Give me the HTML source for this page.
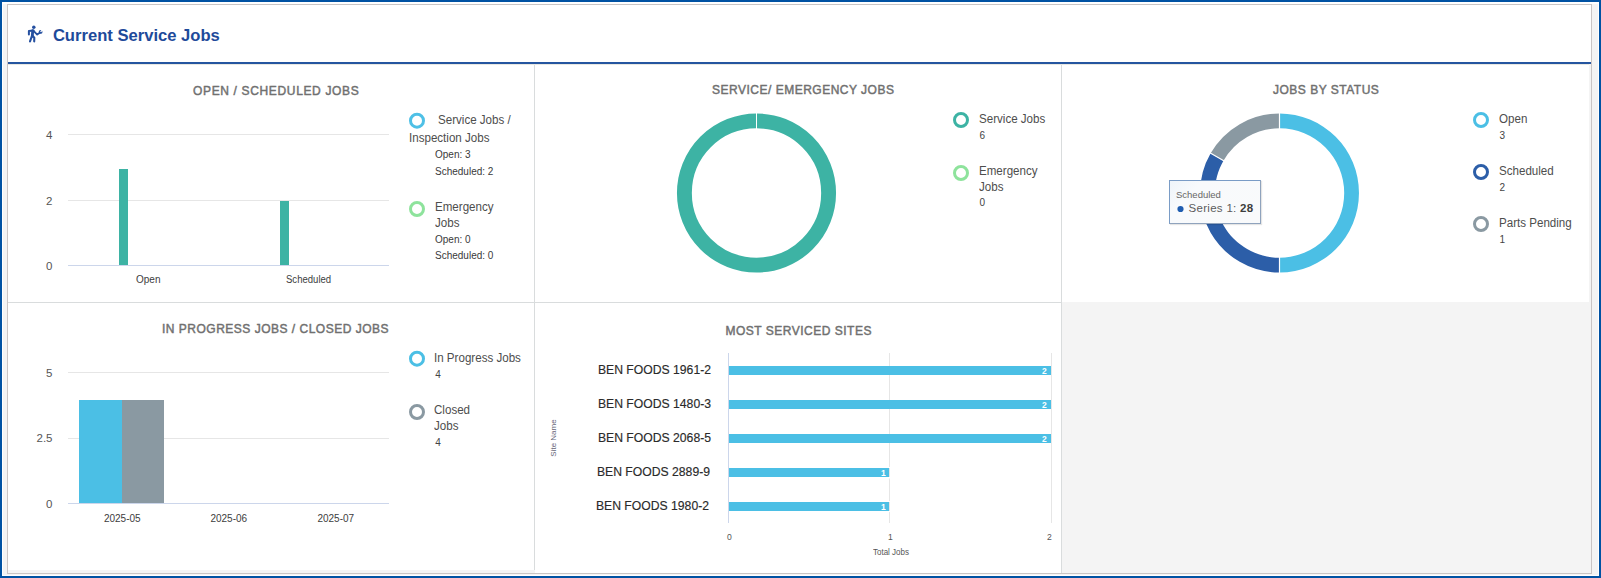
<!DOCTYPE html>
<html><head><meta charset="utf-8">
<style>
html,body{margin:0;padding:0;width:1601px;height:578px;overflow:hidden;background:#fff;}
body{position:relative;font-family:"Liberation Sans",sans-serif;}
.a{position:absolute;}
.t{position:absolute;white-space:nowrap;line-height:1;}
.ttl{position:absolute;white-space:nowrap;line-height:1;font-size:12px;font-weight:normal;-webkit-text-stroke:0.45px #707070;color:#707070;letter-spacing:0.5px;}
.ttl1{letter-spacing:0.65px;}
.lg{position:absolute;white-space:nowrap;line-height:1;font-size:12px;color:#4d4d4d;transform:scaleX(0.965);transform-origin:0 0;}
.sm{position:absolute;white-space:nowrap;line-height:1;font-size:10px;color:#3a3a3a;}
.ax{position:absolute;white-space:nowrap;line-height:1;font-size:11.5px;color:#555;width:30px;text-align:right;}
.xl{position:absolute;white-space:nowrap;line-height:1;font-size:10px;color:#3d3d3d;}
.bn{position:absolute;white-space:nowrap;line-height:1;font-size:12.2px;color:#2a2a2a;text-align:right;-webkit-text-stroke:0.15px #2a2a2a;}
</style></head>
<body>
<!-- frame -->
<div class="a" style="left:0;top:0;width:1597px;height:574px;border:2px solid #0052a3;background:#f4f4f4;"></div>
<div class="a" style="left:2px;top:2px;width:1597px;height:2px;background:#fff;"></div>
<div class="a" style="left:2px;top:2px;width:1px;height:574px;background:#fff;"></div>
<div class="a" style="left:1598px;top:2px;width:1px;height:574px;background:#fff;"></div>
<div class="a" style="left:2px;top:575px;width:1597px;height:1px;background:#fff;"></div>
<div class="a" style="left:7px;top:4px;width:1583px;height:568px;border:1px solid #c9c5c5;background:#f4f4f4;"></div>
<!-- header -->
<div class="a" style="left:8px;top:5px;width:1583px;height:57px;background:#fff;"></div>
<div class="a" style="left:8px;top:62px;width:1583px;height:2px;background:#25559f;"></div>
<!-- panels -->
<div class="a" style="left:8px;top:64px;width:526px;height:238px;background:#fff;"></div>
<div class="a" style="left:535px;top:64px;width:526px;height:238px;background:#fff;"></div>
<div class="a" style="left:1062px;top:64px;width:527px;height:238px;background:#fff;"></div>
<div class="a" style="left:8px;top:303px;width:526px;height:267px;background:#fff;"></div>
<div class="a" style="left:535px;top:303px;width:526px;height:270px;background:#fff;"></div>
<div class="a" style="left:534px;top:64px;width:1px;height:506px;background:#d9dcdd;"></div>
<div class="a" style="left:1061px;top:64px;width:1px;height:509px;background:#d9dcdd;"></div>
<div class="a" style="left:8px;top:302px;width:1053px;height:1px;background:#d9dcdd;"></div>
<div class="a" style="left:8px;top:64px;width:1581px;height:1px;background:#e8e8e2;"></div>

<!-- header title -->
<svg class="a" style="left:24px;top:22px" width="22" height="22" viewBox="0 0 22 22">
  <g fill="none" stroke="#2550a0" stroke-linecap="round" stroke-linejoin="round">
    <circle cx="9.8" cy="5.3" r="1.75" fill="#2550a0" stroke="none"/>
    <polyline points="4.9,12.4 4.9,9.0 9.6,8.4" stroke-width="2"/>
    <line x1="8.7" y1="8.6" x2="8.3" y2="14.3" stroke-width="2.8"/>
    <polyline points="9.8,9.2 13.2,12.6 16.2,10.6" stroke-width="1.8"/>
    <polyline points="7.9,14.2 6.0,19.4" stroke-width="2.1"/>
    <polyline points="9.0,14.2 10.3,15.6 10.2,19.4" stroke-width="2.1"/>
  </g>
  <circle cx="16.6" cy="9.9" r="1.9" fill="#2550a0"/><line x1="16.6" y1="9.9" x2="18.6" y2="7.7" stroke="#fff" stroke-width="1.3"/>
</svg>
<div class="t" style="left:52.9px;top:27.5px;font-size:16.6px;font-weight:bold;color:#1e4a9a;">Current Service Jobs</div>

<!-- titles -->
<div class="ttl ttl1" style="left:193px;top:84.9px;">OPEN / SCHEDULED JOBS</div>
<div class="ttl" style="left:712px;top:83.8px;">SERVICE/ EMERGENCY JOBS</div>
<div class="ttl" style="left:1273px;top:83.8px;">JOBS BY STATUS</div>
<div class="ttl" style="left:162px;top:322.6px;">IN PROGRESS JOBS / CLOSED JOBS</div>
<div class="ttl" style="left:725.5px;top:325.2px;">MOST SERVICED SITES</div>

<!-- chart 1 -->
<svg class="a" style="left:0;top:0" width="1601" height="578">
  <rect x="68" y="134" width="321" height="1" fill="#e6e6e6"/>
  <rect x="68" y="200" width="321" height="1" fill="#e6e6e6"/>
  <rect x="68" y="265" width="321" height="1" fill="#ccd6eb"/>
  <rect x="119" y="169" width="9" height="96" fill="#3db3a4"/>
  <rect x="280" y="201" width="9" height="64" fill="#3db3a4"/>
  <circle cx="417" cy="120.7" r="6.5" fill="none" stroke="#4ec0e6" stroke-width="3"/>
  <circle cx="417" cy="209" r="6.5" fill="none" stroke="#8ee39c" stroke-width="3"/>

  <!-- chart 2 donut -->
  <circle cx="756.5" cy="193" r="72.1" fill="none" stroke="#3db3a4" stroke-width="14.9"/>
  <rect x="756" y="112" width="1" height="18" fill="#fff"/>
  <circle cx="961" cy="120" r="6.5" fill="none" stroke="#3db3a4" stroke-width="3"/>
  <circle cx="961" cy="173" r="6.5" fill="none" stroke="#8ee39c" stroke-width="3"/>

  <!-- chart 3 donut -->
  <g transform="translate(1279.5,193)">
    <path d="M0 -79.5 A79.5 79.5 0 0 1 0 79.5 L0 64.7 A64.7 64.7 0 0 0 0 -64.7 Z" fill="#4bbfe5"/>
    <path d="M0 79.5 A79.5 79.5 0 0 1 -68.85 -39.75 L-56.03 -32.35 A64.7 64.7 0 0 0 0 64.7 Z" fill="#2c5ea8"/>
    <path d="M-68.85 -39.75 A79.5 79.5 0 0 1 0 -79.5 L0 -64.7 A64.7 64.7 0 0 0 -56.03 -32.35 Z" fill="#8a99a2"/>
    <line x1="0" y1="-82" x2="0" y2="-62" stroke="#fff" stroke-width="1.2"/>
    <line x1="0" y1="82" x2="0" y2="62" stroke="#fff" stroke-width="1.2"/>
    <line x1="-71" y1="-41" x2="-54" y2="-31.2" stroke="#fff" stroke-width="1.2"/>
  </g>
  <circle cx="1481" cy="120" r="6.5" fill="none" stroke="#4bbfe5" stroke-width="3"/>
  <circle cx="1481" cy="172" r="6.5" fill="none" stroke="#2c5ea8" stroke-width="3"/>
  <circle cx="1481" cy="224" r="6.5" fill="none" stroke="#8a99a2" stroke-width="3"/>

  <!-- chart 4 -->
  <rect x="68" y="372" width="321" height="1" fill="#e6e6e6"/>
  <rect x="68" y="438" width="321" height="1" fill="#e6e6e6"/>
  <rect x="68" y="503" width="321" height="1" fill="#ccd6eb"/>
  <rect x="79" y="400" width="43" height="103" fill="#4bbfe5"/>
  <rect x="122" y="400" width="42" height="103" fill="#8a99a2"/>
  <circle cx="417" cy="358.7" r="6.5" fill="none" stroke="#4bbfe5" stroke-width="3"/>
  <circle cx="417" cy="412" r="6.5" fill="none" stroke="#8a99a2" stroke-width="3"/>

  <!-- chart 5 -->
  <rect x="889" y="353" width="1" height="170" fill="#e6e6e6"/>
  <rect x="1051" y="353" width="1" height="170" fill="#e6e6e6"/>
  <rect x="728" y="353" width="1" height="170" fill="#ccd6eb"/>
  <rect x="729" y="366" width="322" height="9" fill="#4bbfe5"/>
  <rect x="729" y="400" width="322" height="9" fill="#4bbfe5"/>
  <rect x="729" y="434" width="322" height="9" fill="#4bbfe5"/>
  <rect x="729" y="468" width="160" height="9" fill="#4bbfe5"/>
  <rect x="729" y="502" width="160" height="9" fill="#4bbfe5"/>
  <rect x="889" y="477" width="1" height="1.5" fill="#fff"/><rect x="889" y="501" width="1" height="1" fill="#fff"/><rect x="889" y="511" width="1" height="1" fill="#fff"/><rect x="889" y="467" width="1" height="1" fill="#fff"/>
</svg>

<!-- chart 1 labels -->
<div class="ax" style="left:22.5px;top:129.8px;">4</div>
<div class="ax" style="left:22.5px;top:195.8px;">2</div>
<div class="ax" style="left:22.5px;top:260.8px;">0</div>
<div class="xl" style="left:136px;top:274.7px;">Open</div>
<div class="xl" style="left:286px;top:274.5px;transform:scaleX(0.955);transform-origin:0 0;">Scheduled</div>
<div class="lg" style="left:438.0px;top:113.6px;">Service Jobs /</div>
<div class="lg" style="left:408.5px;top:131.7px;">Inspection Jobs</div>
<div class="sm" style="left:435px;top:149.8px;">Open: 3</div>
<div class="sm" style="left:435px;top:166.5px;">Scheduled: 2</div>
<div class="lg" style="left:434.5px;top:200.5px;">Emergency</div>
<div class="lg" style="left:434.5px;top:216.5px;">Jobs</div>
<div class="sm" style="left:435px;top:235px;">Open: 0</div>
<div class="sm" style="left:435px;top:250.9px;">Scheduled: 0</div>

<!-- chart 2 legend -->
<div class="lg" style="left:978.5px;top:112.8px;">Service Jobs</div>
<div class="sm" style="font-size:10px;margin-top:0.4px;color:#444;left:979.5px;top:130.5px;">6</div>
<div class="lg" style="left:978.5px;top:164.6px;">Emergency</div>
<div class="lg" style="left:978.5px;top:181.4px;">Jobs</div>
<div class="sm" style="font-size:10px;margin-top:0.4px;color:#444;left:979.5px;top:198px;">0</div>

<!-- chart 3 tooltip -->
<div class="a" style="left:1169px;top:180px;width:90px;height:42px;border:1px solid #7a9cc6;border-right-color:#8fa3bd;border-bottom-color:#8fa3bd;background:linear-gradient(135deg,#eef4fa 0%,#f8fafc 25%,#f9fafb 100%);box-shadow:1px 1px 1px rgba(0,0,0,0.10);"></div>
<div class="t" style="left:1176px;top:189.9px;font-size:9.5px;color:#666;">Scheduled</div>
<svg class="a" style="left:1176px;top:205px" width="9" height="9"><circle cx="4.5" cy="4" r="3.1" fill="#1f5db0"/></svg>
<div class="t" style="left:1188.5px;top:202.5px;font-size:11.5px;color:#5c5c5c;letter-spacing:0.3px;">Series 1: <b style="color:#3d3d3d">28</b></div>

<!-- chart 3 legend -->
<div class="lg" style="left:1498.5px;top:112.8px;">Open</div>
<div class="sm" style="font-size:10px;margin-top:0.4px;color:#444;left:1499.5px;top:130.6px;">3</div>
<div class="lg" style="left:1498.5px;top:165.1px;">Scheduled</div>
<div class="sm" style="font-size:10px;margin-top:0.4px;color:#444;left:1499.5px;top:182.5px;">2</div>
<div class="lg" style="left:1498.5px;top:217.3px;">Parts Pending</div>
<div class="sm" style="font-size:10px;margin-top:0.4px;color:#444;left:1499.5px;top:234.7px;">1</div>

<!-- chart 4 labels -->
<div class="ax" style="left:22.5px;top:367.8px;">5</div>
<div class="ax" style="left:22.5px;top:432.8px;">2.5</div>
<div class="ax" style="left:22.5px;top:498.8px;">0</div>
<div class="xl" style="left:103.9px;top:513.5px;">2025-05</div>
<div class="xl" style="left:210.4px;top:513.5px;">2025-06</div>
<div class="xl" style="left:317.4px;top:513.5px;">2025-07</div>
<div class="lg" style="left:434.3px;top:351.6px;">In Progress Jobs</div>
<div class="sm" style="font-size:10px;margin-top:0.4px;color:#444;left:435.3px;top:369.7px;">4</div>
<div class="lg" style="left:434.3px;top:403.9px;">Closed</div>
<div class="lg" style="left:434.3px;top:419.5px;">Jobs</div>
<div class="sm" style="font-size:10px;margin-top:0.4px;color:#444;left:435.3px;top:437.7px;">4</div>

<!-- chart 5 labels -->
<div class="bn" style="left:560px;width:151px;top:363.5px;">BEN FOODS 1961-2</div>
<div class="bn" style="left:560px;width:151px;top:397.5px;">BEN FOODS 1480-3</div>
<div class="bn" style="left:560px;width:151px;top:431.5px;">BEN FOODS 2068-5</div>
<div class="bn" style="left:560px;width:150px;top:465.5px;">BEN FOODS 2889-9</div>
<div class="bn" style="left:560px;width:149px;top:499.5px;">BEN FOODS 1980-2</div>
<div class="t" style="left:1042px;top:367px;font-size:8.5px;font-weight:bold;color:#fff;">2</div>
<div class="t" style="left:1042px;top:401px;font-size:8.5px;font-weight:bold;color:#fff;">2</div>
<div class="t" style="left:1042px;top:435px;font-size:8.5px;font-weight:bold;color:#fff;">2</div>
<div class="t" style="left:881px;top:469px;font-size:8.5px;font-weight:bold;color:#fff;">1</div>
<div class="t" style="left:881px;top:503px;font-size:8.5px;font-weight:bold;color:#fff;">1</div>
<div class="t" style="left:726.9px;top:532.6px;font-size:8.6px;color:#555;">0</div>
<div class="t" style="left:887.9px;top:532.6px;font-size:8.6px;color:#555;">1</div>
<div class="t" style="left:1046.9px;top:532.6px;font-size:8.6px;color:#555;">2</div>
<div class="t" style="left:872.5px;top:547.6px;font-size:8.6px;color:#555;transform:scaleX(0.93);transform-origin:0 0;">Total Jobs</div>
<div class="t" style="left:534px;top:434px;width:40px;text-align:center;font-size:8px;color:#667;transform:rotate(-90deg);">Site Name</div>
</body></html>
